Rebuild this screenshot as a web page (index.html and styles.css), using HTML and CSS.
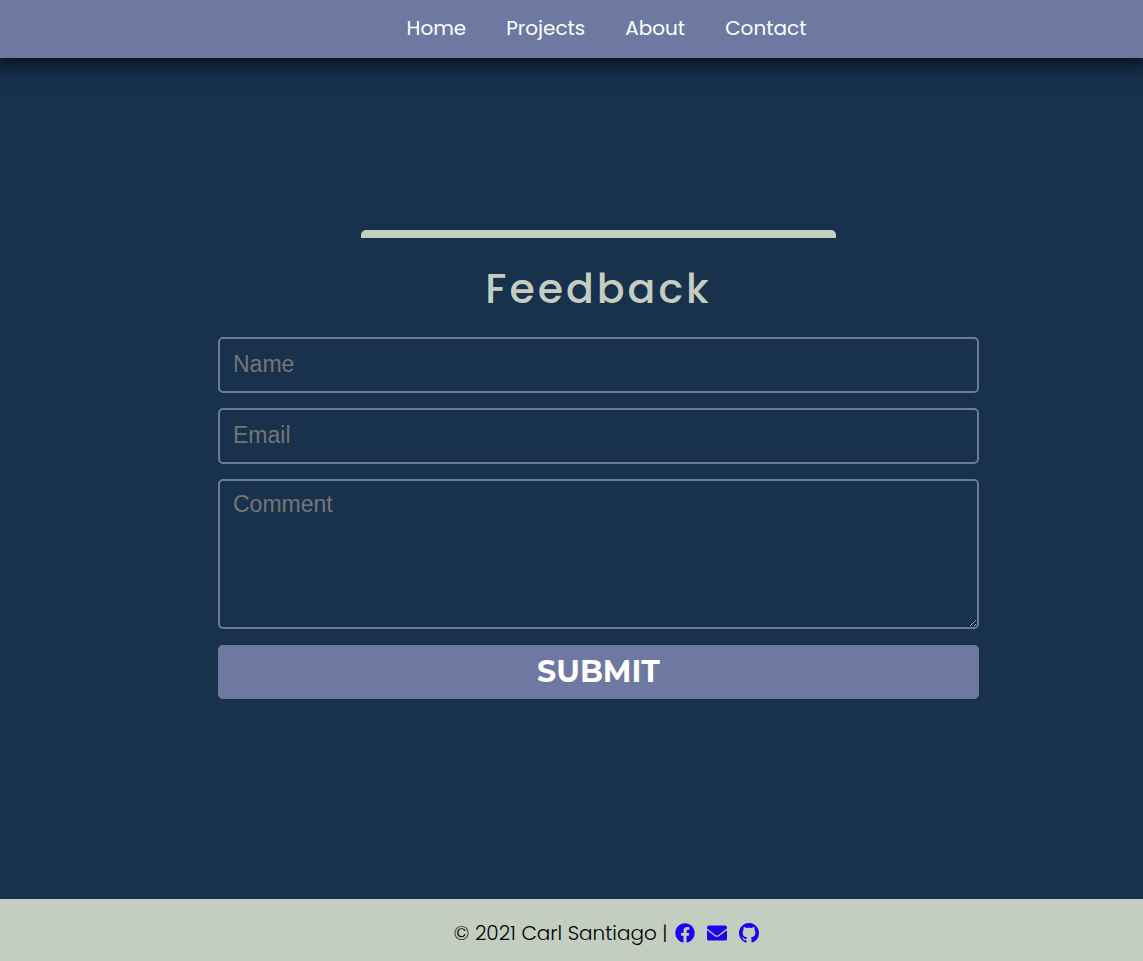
FILE: index.html
```html
<!DOCTYPE html>
<html lang="en">
<head>
<meta charset="utf-8">
<meta name="viewport" content="width=device-width, initial-scale=1">
<title>Feedback</title>
<link rel="stylesheet" href="styles.css">
</head>
<body>
<header class="navbar">
  <nav>
    <ul class="nav-list">
      <li><a class="nav-link" href="#home">Home</a></li>
      <li><a class="nav-link" href="#projects">Projects</a></li>
      <li><a class="nav-link" href="#about">About</a></li>
      <li><a class="nav-link" href="#contact">Contact</a></li>
    </ul>
  </nav>
</header>
<main class="contact">
  <form class="feedback">
    <div class="accent"></div>
    <h1 class="title">Feedback</h1>
    <input class="field" type="text" name="name" placeholder="Name" aria-label="Name">
    <input class="field" type="email" name="email" placeholder="Email" aria-label="Email">
    <textarea class="field comment" name="comment" placeholder="Comment" aria-label="Comment"></textarea>
    <button class="submit" type="submit">SUBMIT</button>
  </form>
</main>
<footer class="footer">
  <p class="copyright">© 2021 Carl Santiago |</p>
  <a class="social" href="#facebook" aria-label="Facebook"><svg viewBox="0 0 512 512"><path d="M504 256C504 119 393 8 256 8S8 119 8 256c0 123.780 90.690 226.380 209.250 245V327.690h-63V256h63v-54.640c0-62.150 37-96.480 93.670-96.480 27.140 0 55.520 4.840 55.520 4.840v61h-31.280c-30.800 0-40.410 19.120-40.410 38.730V256h68.780l-11 71.690h-57.780V501C413.310 482.380 504 379.780 504 256z"/></svg></a>
  <a class="social" href="#email" aria-label="Email"><svg viewBox="0 0 512 512"><path d="M502.300 190.800c3.900-3.100 9.700-.2 9.700 4.700V400c0 26.500-21.500 48-48 48H48c-26.500 0-48-21.500-48-48V195.600c0-5 5.700-7.800 9.700-4.700 22.400 17.400 52.100 39.500 154.100 113.600 21.100 15.400 56.700 47.800 92.200 47.600 35.700.3 72-32.800 92.300-47.600 102-74.100 131.600-96.300 154-113.700zM256 320c23.200.4 56.600-29.200 73.400-41.400 132.700-96.300 142.800-104.700 173.400-128.700 5.800-4.500 9.200-11.500 9.200-18.900v-19c0-26.500-21.500-48-48-48H48c-26.500 0-48 21.500-48 48v19c0 7.400 3.400 14.300 9.200 18.900 30.600 23.900 40.700 32.400 173.400 128.700 16.800 12.200 50.200 41.800 73.400 41.400z"/></svg></a>
  <a class="social" href="#github" aria-label="GitHub"><svg viewBox="0 0 16 16"><path d="M8 0C3.580 0 0 3.580 0 8c0 3.540 2.290 6.530 5.470 7.590.4.070.55-.17.55-.38 0-.19-.01-.82-.01-1.490-2.010.37-2.530-.49-2.690-.94-.09-.23-.48-.94-.82-1.130-.28-.15-.68-.52-.01-.53.63-.01 1.080.58 1.230.82.72 1.210 1.870.87 2.330.66.07-.52.28-.87.51-1.070-1.780-.2-3.640-.89-3.640-3.950 0-.87.31-1.590.82-2.150-.08-.2-.36-1.020.08-2.120 0 0 .67-.21 2.200.82.64-.18 1.320-.27 2-.27s1.360.09 2 .27c1.530-1.040 2.200-.82 2.200-.82.44 1.100.16 1.920.08 2.120.51.56.82 1.270.82 2.150 0 3.070-1.870 3.750-3.650 3.950.29.25.54.73.54 1.480 0 1.070-.01 1.930-.01 2.200 0 .21.15.46.55.38A8.010 8.010 0 0 0 16 8c0-4.420-3.580-8-8-8z"/></svg></a>
</footer>
</body>
</html>
```
FILE: styles.css
```css
* {
  box-sizing: border-box;
}

body {
  margin: 0;
  min-height: 100vh;
  display: flex;
  flex-direction: column;
  background: #18314c;
  font-family: Poppins, Inter, sans-serif;
  font-size: 20px;
}

.navbar {
  display: flex;
  justify-content: center;
  padding: 13px 0 15px 70px;
  background: #6e79a2;
  box-shadow: 0 0 20px 6px rgba(0, 0, 0, 0.75);
}

.nav-list {
  display: flex;
  gap: 40px;
  margin: 0;
  padding: 0;
  list-style: none;
  line-height: 30px;
}

.nav-link {
  color: #ffffff;
  text-decoration: none;
}

.contact {
  flex: 1;
  display: flex;
  justify-content: center;
  align-items: center;
  padding: 0 0 28px 54px;
}

.feedback {
  width: 70%;
  max-width: 761px;
  display: flex;
  flex-direction: column;
  gap: 15px;
}

.accent {
  align-self: center;
  width: 475px;
  max-width: 100%;
  height: 8px;
  border-radius: 5px 5px 0 0;
  background: #c4cec0;
}

.title {
  margin: 0;
  padding: 4px 0 1px;
  color: #c4cec0;
  font-size: 41px;
  font-weight: 500;
  line-height: 64px;
  letter-spacing: 3px;
  text-align: center;
}

.field {
  width: 100%;
  height: 56px;
  margin: 0;
  padding: 10px 13px 12px;
  border: 2px solid #6e79a2;
  border-radius: 5px;
  outline: 0;
  background: transparent;
  color: #ffffff;
  font-family: "Liberation Sans", Arial, sans-serif;
  font-size: 23px;
}

.field::placeholder {
  color: #757575;
}

.comment {
  display: block;
  height: 150px;
  resize: both;
}

.submit {
  height: 54px;
  margin-top: 1px;
  padding: 0 0 2px;
  border: 0;
  border-radius: 5px;
  background: #6e79a2;
  color: #ffffff;
  font-family: Montserrat, Inter, sans-serif;
  font-size: 30px;
  font-weight: 700;
}

.footer {
  display: flex;
  justify-content: center;
  align-items: center;
  gap: 12px;
  padding: 19px 0 13px 70px;
  background: #c4cec0;
}

.copyright {
  margin: 0 -4px 0 0;
  color: #000000;
  font-weight: 300;
  line-height: 30px;
}

.social {
  display: flex;
  color: #2000f0;
}

.social svg {
  width: 20px;
  height: 20px;
  fill: currentColor;
}
```
